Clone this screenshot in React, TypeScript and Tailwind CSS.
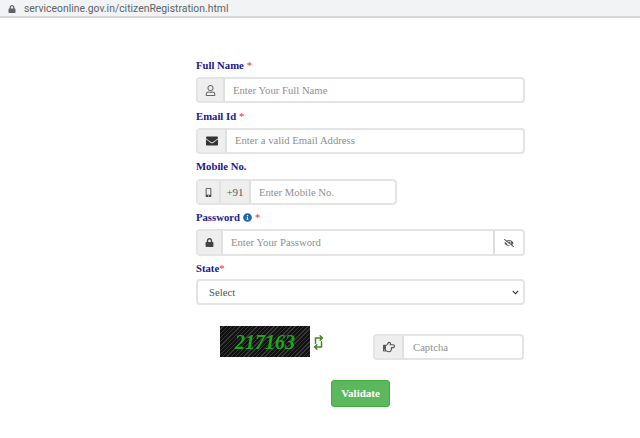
import React from "react";
import { FaRegUser, FaEnvelope, FaMobileAlt, FaLock, FaInfoCircle, FaRegHandPointRight, FaEyeSlash, FaRetweet, FaChevronDown } from "react-icons/fa";

const serif = "font-['Liberation_Serif',serif]";

function Label({ children }: { children: React.ReactNode }) {
  return <div className="h-[25px] flex items-center text-[10.7px] font-bold text-[#1a1a8c] leading-none pt-[1px]">{children}</div>;
}
const Star = () => <span className="text-[#f22] font-normal ml-[3px]">*</span>;

function Addon({ w, children }: { w: string; children: React.ReactNode }) {
  return (
    <div className={`${w} h-full flex items-center justify-center bg-[#eeeeee] border-r-2 border-[#e0e0e0] text-[#555] text-[11px] shrink-0`}>
      {children}
    </div>
  );
}

function Group({ className, children }: { className: string; children: React.ReactNode }) {
  return <div className={`${className} flex items-center border-2 border-[#e4e4e4] rounded-[4px] overflow-hidden bg-white`}>{children}</div>;
}

function Ph({ children, className }: { children: React.ReactNode; className: string }) {
  return <div className={`${className} text-[10.7px] text-[#8f8f8f] whitespace-nowrap`}>{children}</div>;
}

export default function App() {
  return (
    <div className={`w-[640px] h-[438px] bg-white overflow-hidden ${serif}`}>
      <div className="h-[18px] pt-[2px] bg-[#f1f3f4] border-b-2 border-[#d4d6d7] flex items-center pl-[8px] gap-[8px] font-['Roboto',sans-serif] text-[10.4px] text-[#5f6368]">
        <FaLock className="text-[#5f6368] text-[8px]" />
        <span>serviceonline.gov.in/citizenRegistration.html</span>
      </div>
      <div className="pl-[196px] pt-[34px]">
        <div className="w-[329px] flex flex-col">
          <Label>Full Name<Star /></Label>
          <Group className="w-full h-[26px]">
            <Addon w="w-[27px]"><FaRegUser className="text-[11px] text-[#666]" /></Addon>
            <Ph className="pl-[8px]">Enter Your Full Name</Ph>
          </Group>
          <Label>Email Id<Star /></Label>
          <Group className="w-full h-[26px]">
            <Addon w="w-[29px]"><FaEnvelope className="text-[12px] text-[#333]" /></Addon>
            <Ph className="pl-[8px] pb-[1px]">Enter a valid Email Address</Ph>
          </Group>
          <div className="-mt-[1px]"><Label>Mobile No.</Label></div>
          <Group className="w-[201px] h-[26px] mt-[1px]">
            <Addon w="w-[23px]"><FaMobileAlt className="text-[9px] text-[#444]" /></Addon>
            <Addon w="w-[30px]">+91</Addon>
            <Ph className="pl-[8px]">Enter Mobile No.</Ph>
          </Group>
          <div className="h-[23px] -mt-[1px]"><Label>Password<FaInfoCircle className="text-[#1d66a8] text-[9px] ml-[3px]" /><Star /></Label></div>
          <Group className="w-full h-[27px] mt-[2px]">
            <Addon w="w-[25px]"><FaLock className="text-[9px] text-[#444]" /></Addon>
            <Ph className="pl-[8px] flex-1">Enter Your Password</Ph>
            <div className="w-[30px] h-full border-l-2 border-[#dcdcdc] flex items-center justify-center shrink-0">
              <FaEyeSlash className="text-[10px] text-[#555]" />
            </div>
          </Group>
          <div className="h-[23px] -mt-[1px]"><Label>State<span className="text-[#f22] font-normal">*</span></Label></div>
          <div className="w-full h-[26px] mt-[1px] border-2 border-[#e4e4e4] rounded-[4px] flex items-center justify-between pl-[11px] pr-[4px] text-[10.7px] text-[#555]">
            <span>Select</span>
            <FaChevronDown className="text-[7px] text-[#222]" />
          </div>
        </div>
        <div className="w-[329px] flex items-start pt-[21px]">
          <div className="ml-[24px] w-[90px] h-[31px] bg-[#1c1c1c] bg-[repeating-linear-gradient(135deg,#111_0,#111_2px,#383838_2px,#383838_3px)] flex items-center justify-center text-[#18aa14] text-[20px] font-bold italic leading-none shrink-0">217163</div>
          <FaRetweet className="ml-[1px] mt-[9px] rotate-90 text-[#3c8a22] text-[15px] shrink-0" />
          <Group className="ml-[47px] mt-[8px] w-[151px] h-[26px]">
            <Addon w="w-[29px]"><FaRegHandPointRight className="text-[12px] text-[#555]" /></Addon>
            <Ph className="pl-[9px]">Captcha</Ph>
          </Group>
        </div>
        <div className="w-[329px] pt-[20px]">
          <div className="ml-[135px] w-[59px] h-[27px] rounded-[3px] bg-[#5cb85c] border border-[#3fae3f] text-white text-[11px] font-bold flex items-center justify-center">Validate</div>
        </div>
      </div>
    </div>
  );
}
